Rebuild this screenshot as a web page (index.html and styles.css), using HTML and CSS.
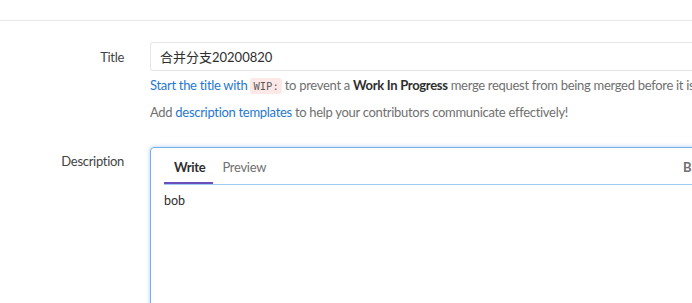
FILE: index.html
```html
<!DOCTYPE html>
<html>
<head>
<meta charset="utf-8">
<link rel="stylesheet" href="styles.css">
</head>
<body>
<div class="page">
  <div class="topbar"></div>
  <form class="mr-form">
    <div class="row row-title">
      <label class="label">Title</label>
      <div class="field">
        <div class="input">合并分支20200820</div>
        <p class="help first"><a class="link">Start the title with <code class="code">WIP:</code></a> to prevent a <strong>Work In Progress</strong> merge request from being merged before it is ready.</p>
        <p class="help">Add <a class="link">description templates</a> to help your contributors communicate effectively!</p>
      </div>
    </div>
    <div class="row row-desc">
      <label class="label">Description</label>
      <div class="field">
        <div class="md-area">
          <div class="md-header">
            <ul class="tabs">
              <li class="tab active">Write</li>
              <li class="tab">Preview</li>
            </ul>
            <div class="toolbar">
              <span class="tool bold">B</span>
              <span class="tool italic">I</span>
            </div>
          </div>
          <div class="md-body">bob</div>
        </div>
      </div>
    </div>
  </form>
</div>
</body>
</html>
```

FILE: styles.css
```css
html, body {
  margin: 0;
  padding: 0;
  background: #fff;
  overflow: hidden;
}
body {
  font-family: "Lato", "Noto Sans CJK SC", sans-serif;
  font-size: 13px;
  letter-spacing: -0.3px;
  color: #2e2e2e;
}
.page {
  width: 692px;
  height: 303px;
  overflow: hidden;
}
.topbar {
  height: 20px;
  border-bottom: 1px solid #e8e8e8;
}
.mr-form {
  padding-top: 21px;
}
.row {
  display: grid;
  grid-template-columns: 124px 700px;
  column-gap: 26px;
}
.label {
  text-align: right;
  color: #444;
}
.row-title .label {
  padding-top: 7px;
}
.input {
  height: 27px;
  border: 1px solid #e5e5e5;
  border-radius: 3px;
  padding: 0 9px;
  line-height: 28px;
  color: #2e2e2e;
  letter-spacing: 0;
}
.help {
  margin: 0;
  color: #707070;
  white-space: nowrap;
  line-height: 18px;
}
.help.first {
  margin-top: 5px;
}
.help + .help {
  margin-top: 8px;
}
.link {
  color: #1f78d1;
}
.code {
  font-family: "DejaVu Sans Mono", monospace;
  font-size: 10.5px;
  letter-spacing: 0;
  background: #fce8e6;
  color: #5c5c5c;
  padding: 2px 3px;
  border-radius: 3px;
}
strong {
  color: #2e2e2e;
  font-weight: 700;
}
.row-desc {
  margin-top: 26px;
}
.row-desc .label {
  padding-top: 6px;
}
.md-area {
  height: 200px;
  border: 1px solid #73afea;
  border-radius: 4px;
  box-shadow: 0 0 4px rgba(115, 175, 234, 0.6);
}
.md-header {
  display: flex;
  align-items: flex-end;
  margin: 0 13px;
  height: 36px;
  border-bottom: 1px solid #9fcaf3;
}
.tabs {
  display: flex;
  list-style: none;
  margin: 0;
  padding: 0;
  width: 110px;
}
.tab {
  padding: 0 9px 8px;
  color: #707070;
  line-height: 18px;
}
.tab.active {
  color: #2e2e2e;
  font-weight: 700;
  box-shadow: inset 0 -2px 0 #6b4fbb;
  padding: 0 8px 8px 10px;
}
.toolbar {
  display: flex;
  margin-left: 409px;
  padding-bottom: 9px;
}
.tool {
  width: 24px;
  color: #707070;
  font-weight: 700;
  letter-spacing: 0;
}
.tool.italic {
  font-style: italic;
}
.md-body {
  padding: 8px 13px;
  font-size: 12.5px;
  letter-spacing: 0;
  color: #2e2e2e;
}
```
